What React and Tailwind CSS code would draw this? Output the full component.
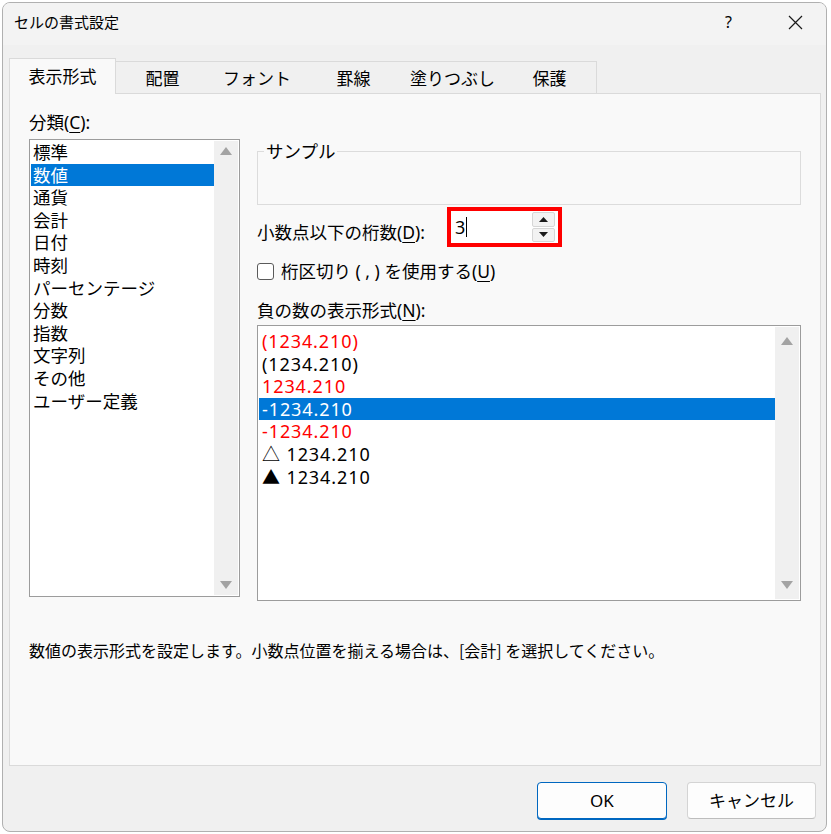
const categories = [
  '標準',
  '数値',
  '通貨',
  '会計',
  '日付',
  '時刻',
  'パーセンテージ',
  '分数',
  '指数',
  '文字列',
  'その他',
  'ユーザー定義',
]

const negatives = [
  { text: '(1234.210)', red: true },
  { text: '(1234.210)' },
  { text: '1234.210', red: true },
  { text: '-1234.210', selected: true },
  { text: '-1234.210', red: true },
  { text: '△ 1234.210' },
  { text: '▲ 1234.210' },
]

const tabs = [
  { label: '表示形式', w: 'w-[107px]', active: true },
  { label: '配置', w: 'w-[93px]' },
  { label: 'フォント', w: 'w-[96px]' },
  { label: '罫線', w: 'w-[97px]' },
  { label: '塗りつぶし', w: 'w-[101px]' },
  { label: '保護', w: 'w-[94px]' },
]

function ScrollArrow({ down }) {
  return (
    <svg width="12" height="8" viewBox="0 0 12 8" className="fill-[#a3a3a3]">
      {down ? <path d="M0 0 L12 0 L6 8 Z" /> : <path d="M0 8 L12 8 L6 0 Z" />}
    </svg>
  )
}

function ScrollBar({ top = 'pt-[8px]', bottom = 'pb-[8px]' }) {
  return (
    <div className={`w-[24px] shrink-0 bg-[#f0f0f0] flex flex-col items-center justify-between ${top} ${bottom}`}>
      <ScrollArrow />
      <ScrollArrow down />
    </div>
  )
}

function Mn({ children }) {
  return <span className="underline underline-offset-[3px] decoration-1">{children}</span>
}

export default function App() {
  return (
    <div className="w-[831px] h-[834px] bg-white pt-[2px] pl-[2px] text-black font-['Noto_Sans','Noto_Sans_CJK_JP',sans-serif]">
      <div className="w-[825px] h-[830px] rounded-[8px] border border-[#b0b0b0] bg-[#f0f0f0] flex flex-col overflow-hidden">
        {/* Title bar */}
        <div className="h-[42px] shrink-0 bg-[#f3f3f3] flex items-center pl-[11px] pr-[23px] pb-[4px]">
          <span className="flex-1 text-[15px] font-['Noto_Sans_CJK_JP',sans-serif]">セルの書式設定</span>
          <span className="text-[16px] leading-none">?</span>
          <svg width="15" height="15" viewBox="0 0 15 15" className="ml-[56px] stroke-[#1a1a1a]" strokeWidth="1.2">
            <path d="M1 1 L14 14 M14 1 L1 14" />
          </svg>
        </div>

        {/* Tabs */}
        <div className="mt-[13px] h-[36px] pl-[6px] flex items-end -mb-px relative z-10">
          {tabs.map((t, i) => (
            <div
              key={t.label}
              className={`${t.w} flex items-center justify-center text-[17px] font-['Noto_Sans_CJK_JP',sans-serif] border-t border-[#dadada] ${
                t.active
                  ? 'h-[36px] bg-[#f9f9f9] border-l border-r pb-[2px]'
                  : `h-[33px] bg-[#f0f0f0] border-b ${i === tabs.length - 1 ? 'border-r' : ''}`
              }`}
            >
              {t.label}
            </div>
          ))}
        </div>

        {/* Panel */}
        <div className="ml-[6px] w-[812px] h-[673px] shrink-0 border border-[#dadada] bg-[#f9f9f9] pt-[17px] px-[19px] text-[17.5px]">
          <div className="flex items-start">
            {/* Left column */}
            <div className="w-[211px] shrink-0">
              <div className="leading-[22px]">
                分類(<Mn>C</Mn>):
              </div>
              <div className="mt-[6px] h-[458px] border border-[#9c9c9c] bg-white p-px flex">
                <div className="flex-1">
                  {categories.map((c, i) => (
                    <div
                      key={c}
                      className={`h-[22.6px] leading-[22.6px] pl-[2px] ${i === 1 ? 'bg-[#0078d7] text-white' : ''}`}
                    >
                      {c}
                    </div>
                  ))}
                </div>
                <ScrollBar top="pt-[6px]" bottom="pb-[6px]" />
              </div>
            </div>

            {/* Right column */}
            <div className="w-[544px] ml-[17px] shrink-0">
              <fieldset className="mt-[29px] h-[65px] border border-[#dcdcdc] px-[6px]">
                <legend className="px-[2px] leading-[22px]">サンプル</legend>
              </fieldset>

              <div className="mt-[2px] h-[40px] flex items-start">
                <div className="w-[190px] pt-[14px] leading-[22px]">
                  小数点以下の桁数(<Mn>D</Mn>):
                </div>
                <div className="w-[115px] h-[40px] border-[4px] border-[#ff0000] bg-white flex">
                  <div className="flex-1 flex items-center pl-[4px]">
                    <span className="text-[18px] leading-none">3</span>
                    <span className="ml-[1px] w-px h-[20px] bg-black" />
                  </div>
                  <div className="w-[23px] mr-[3px] my-[1px] flex flex-col gap-px">
                    <div className="flex-1 bg-[#f2f2f2] border border-[#d6d6d6] rounded-[2px] flex items-center justify-center">
                      <svg width="9" height="5" viewBox="0 0 9 5">
                        <path d="M0 5 L9 5 L4.5 0 Z" fill="#1a1a1a" />
                      </svg>
                    </div>
                    <div className="flex-1 bg-[#f2f2f2] border border-[#d6d6d6] rounded-[2px] flex items-center justify-center">
                      <svg width="9" height="5" viewBox="0 0 9 5">
                        <path d="M0 0 L9 0 L4.5 5 Z" fill="#1a1a1a" />
                      </svg>
                    </div>
                  </div>
                </div>
              </div>

              <div className="mt-[13px] h-[22px] flex items-center">
                <span className="w-[17px] h-[17px] border border-[#5a5a5a] rounded-[3px] bg-white" />
                <span className="ml-[7px] leading-[22px]">
                  桁区切り ( , ) を使用する(<Mn>U</Mn>)
                </span>
              </div>

              <div className="mt-[17px] leading-[22px]">
                負の数の表示形式(<Mn>N</Mn>):
              </div>
              <div className="mt-[4px] h-[276px] border border-[#9c9c9c] bg-white p-px flex">
                <div className="flex-1 pt-[3px] text-[18px] tracking-[0.9px]">
                  {negatives.map((n, i) => (
                    <div
                      key={i}
                      className={`h-[22.6px] leading-[22.6px] pl-[3px] ${
                        n.selected ? 'bg-[#0078d7] text-white' : n.red ? 'text-[#ff0000]' : ''
                      }`}
                    >
                      {n.text}
                    </div>
                  ))}
                </div>
                <ScrollBar top="pt-[10px]" bottom="pb-[10px]" />
              </div>
            </div>
          </div>

          <div className="mt-[38px] leading-[22px] text-[16px] font-['Noto_Sans_CJK_JP',sans-serif]">
            数値の表示形式を設定します。小数点位置を揃える場合は、[会計] を選択してください。
          </div>
        </div>

        {/* Buttons */}
        <div className="mt-[16px] flex justify-end gap-[20px] pr-[10px]">
          <button className="w-[130px] h-[37px] rounded-[4px] border border-[#0067c0] shadow-[0_1px_0_#0067c0] bg-[#fdfdfd] text-[17px]">
            OK
          </button>
          <button className="w-[129px] h-[37px] rounded-[4px] border border-[#d4d4d4] border-b-[#bdbdbd] bg-[#fdfdfd] text-[17px]">
            キャンセル
          </button>
        </div>
      </div>
    </div>
  )
}
